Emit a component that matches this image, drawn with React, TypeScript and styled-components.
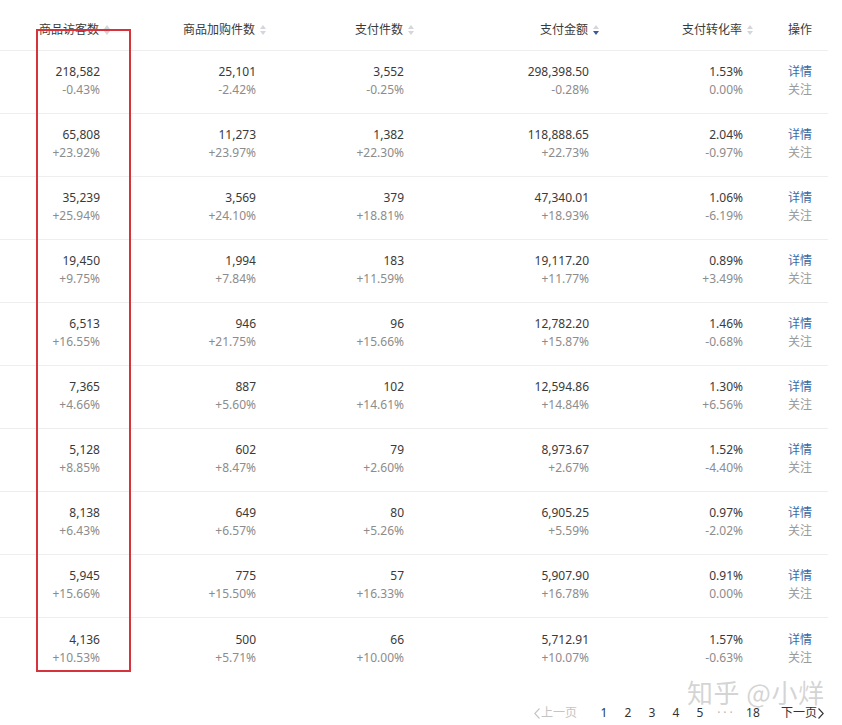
import React from "react";
import styled, { createGlobalStyle } from "styled-components";

const GlobalStyle = createGlobalStyle`
    html, body {
        margin: 0;
        padding: 0;
        background: #ffffff;
    }
    body {
        font-family: "Noto Sans", "Noto Sans CJK SC", sans-serif;
        font-size: 12px;
        color: #333333;
    }
`;

const COLS = "112px 156px 148px 185px 154px 73px";

const Page = styled.div`
    position: relative;
    width: 842px;
    height: 725px;
    overflow: hidden;
`;

const Table = styled.div`
    width: 828px;
`;

const HeaderRow = styled.div`
    display: grid;
    grid-template-columns: ${COLS};
    height: 51px;
    padding-top: 10px;
    box-sizing: border-box;
    border-bottom: 1px solid #eeeeee;
    align-items: center;
`;

const HeadCell = styled.div`
    display: flex;
    align-items: center;
    justify-content: flex-end;
    gap: 5px;
    padding-right: 2px;
    color: #3a3a3a;
    line-height: 18px;
    white-space: nowrap;
`;

const HeadAction = styled.div`
    padding-left: 33px;
    color: #3a3a3a;
    line-height: 18px;
`;

const Row = styled.div`
    display: grid;
    grid-template-columns: ${COLS};
    height: 63px;
    box-sizing: border-box;
    padding-bottom: 2px;
    border-bottom: 1px solid #eeeeee;
    align-items: center;

    &:last-child {
        border-bottom: none;
    }
`;

const NumCell = styled.div`
    display: flex;
    flex-direction: column;
    align-items: flex-end;
    padding-right: 12px;
    line-height: 18px;
    white-space: nowrap;
`;

const Main = styled.span`
    color: #3a3a3a;
`;

const Change = styled.span`
    color: #8c8c8c;
`;

const ActionCell = styled.div`
    display: flex;
    flex-direction: column;
    padding-left: 33px;
    line-height: 18px;
`;

const LinkText = styled.span<{ $muted?: boolean }>`
    color: ${(p) => (p.$muted ? "#9a9a9a" : "#3a6aa3")};
    cursor: pointer;
`;

const Highlight = styled.div`
    position: absolute;
    left: 36px;
    top: 29px;
    width: 91px;
    height: 639px;
    border: 2px solid #d5343c;
    pointer-events: none;
`;

const Watermark = styled.div`
    position: absolute;
    left: 687px;
    top: 681px;
    font-family: "Noto Sans CJK SC", sans-serif;
    font-size: 26px;
    line-height: 22px;
    letter-spacing: 0.5px;
    color: rgba(170, 170, 170, 0.5);
    white-space: nowrap;
    pointer-events: none;
`;

const Pager = styled.div`
    width: 828px;
    display: flex;
    justify-content: flex-end;
    align-items: center;
    height: 24px;
    margin-top: 20px;
    padding-right: 4px;
    box-sizing: border-box;
    font-size: 12px;
`;

const PageStep = styled.span<{ $disabled?: boolean }>`
    display: flex;
    align-items: center;
    gap: 1px;
    line-height: 16px;
    color: ${(p) => (p.$disabled ? "#c4c4c4" : "#333333")};
    margin: ${(p) => (p.$disabled ? "0 15px 0 0" : "0 0 0 13px")};
    cursor: pointer;
`;

const PageNum = styled.span<{ $active?: boolean; $w?: number }>`
    position: relative;
    width: ${(p) => p.$w ?? 24}px;
    text-align: center;
    color: ${(p) => (p.$active ? "#2a3a4a" : "#333333")};
    line-height: 16px;
    cursor: pointer;

    &::after {
        content: "";
        display: ${(p) => (p.$active ? "block" : "none")};
        position: absolute;
        left: 4px;
        right: 4px;
        bottom: -6px;
        height: 2px;
        background: #3d5f80;
    }
`;

const Dots = styled.span`
    width: 26px;
    text-align: center;
    line-height: 16px;
    color: #b8b8b8;
    letter-spacing: 3px;
    text-indent: 3px;
`;

type SortDir = "none" | "desc";

function SortIcon({ dir = "none" }: { dir?: SortDir }) {
    const off = "#d3d6db";
    const on = "#3d5a98";
    return (
        <svg width="6" height="10" viewBox="0 0 6 10">
            <polygon points="3,0 6,4 0,4" fill={off} />
            <polygon points="0,6 6,6 3,10" fill={dir === "desc" ? on : off} />
        </svg>
    );
}

function Chevron({ left, color }: { left?: boolean; color: string }) {
    return (
        <svg width="6" height="11" viewBox="0 0 6 11">
            <polyline
                points={left ? "5.5,0.5 0.8,5.5 5.5,10.5" : "0.5,0.5 5.2,5.5 0.5,10.5"}
                fill="none"
                stroke={color}
                strokeWidth="1.1"
            />
        </svg>
    );
}

const headers: { label: string; dir?: SortDir }[] = [
    { label: "商品访客数" },
    { label: "商品加购件数" },
    { label: "支付件数" },
    { label: "支付金额", dir: "desc" },
    { label: "支付转化率" },
];

const rows: [string, string][][] = [
    [["218,582", "-0.43%"], ["25,101", "-2.42%"], ["3,552", "-0.25%"], ["298,398.50", "-0.28%"], ["1.53%", "0.00%"]],
    [["65,808", "+23.92%"], ["11,273", "+23.97%"], ["1,382", "+22.30%"], ["118,888.65", "+22.73%"], ["2.04%", "-0.97%"]],
    [["35,239", "+25.94%"], ["3,569", "+24.10%"], ["379", "+18.81%"], ["47,340.01", "+18.93%"], ["1.06%", "-6.19%"]],
    [["19,450", "+9.75%"], ["1,994", "+7.84%"], ["183", "+11.59%"], ["19,117.20", "+11.77%"], ["0.89%", "+3.49%"]],
    [["6,513", "+16.55%"], ["946", "+21.75%"], ["96", "+15.66%"], ["12,782.20", "+15.87%"], ["1.46%", "-0.68%"]],
    [["7,365", "+4.66%"], ["887", "+5.60%"], ["102", "+14.61%"], ["12,594.86", "+14.84%"], ["1.30%", "+6.56%"]],
    [["5,128", "+8.85%"], ["602", "+8.47%"], ["79", "+2.60%"], ["8,973.67", "+2.67%"], ["1.52%", "-4.40%"]],
    [["8,138", "+6.43%"], ["649", "+6.57%"], ["80", "+5.26%"], ["6,905.25", "+5.59%"], ["0.97%", "-2.02%"]],
    [["5,945", "+15.66%"], ["775", "+15.50%"], ["57", "+16.33%"], ["5,907.90", "+16.78%"], ["0.91%", "0.00%"]],
    [["4,136", "+10.53%"], ["500", "+5.71%"], ["66", "+10.00%"], ["5,712.91", "+10.07%"], ["1.57%", "-0.63%"]],
];

export default function App() {
    return (
        <Page>
            <GlobalStyle />
            <Table>
                <HeaderRow>
                    {headers.map((h) => (
                        <HeadCell key={h.label}>
                            <span>{h.label}</span>
                            <SortIcon dir={h.dir} />
                        </HeadCell>
                    ))}
                    <HeadAction>操作</HeadAction>
                </HeaderRow>
                {rows.map((r, i) => (
                    <Row key={i}>
                        {r.map(([v, c], j) => (
                            <NumCell key={j}>
                                <Main>{v}</Main>
                                <Change>{c}</Change>
                            </NumCell>
                        ))}
                        <ActionCell>
                            <LinkText>详情</LinkText>
                            <LinkText $muted>关注</LinkText>
                        </ActionCell>
                    </Row>
                ))}
            </Table>
            <Pager>
                <PageStep $disabled>
                    <Chevron left color="#c4c4c4" />
                    上一页
                </PageStep>
                <PageNum $active>1</PageNum>
                <PageNum>2</PageNum>
                <PageNum>3</PageNum>
                <PageNum>4</PageNum>
                <PageNum>5</PageNum>
                <Dots>···</Dots>
                <PageNum $w={30}>18</PageNum>
                <PageStep>
                    下一页
                    <Chevron color="#333333" />
                </PageStep>
            </Pager>
            <Highlight />
            <Watermark>知乎 @小烊</Watermark>
        </Page>
    );
}
